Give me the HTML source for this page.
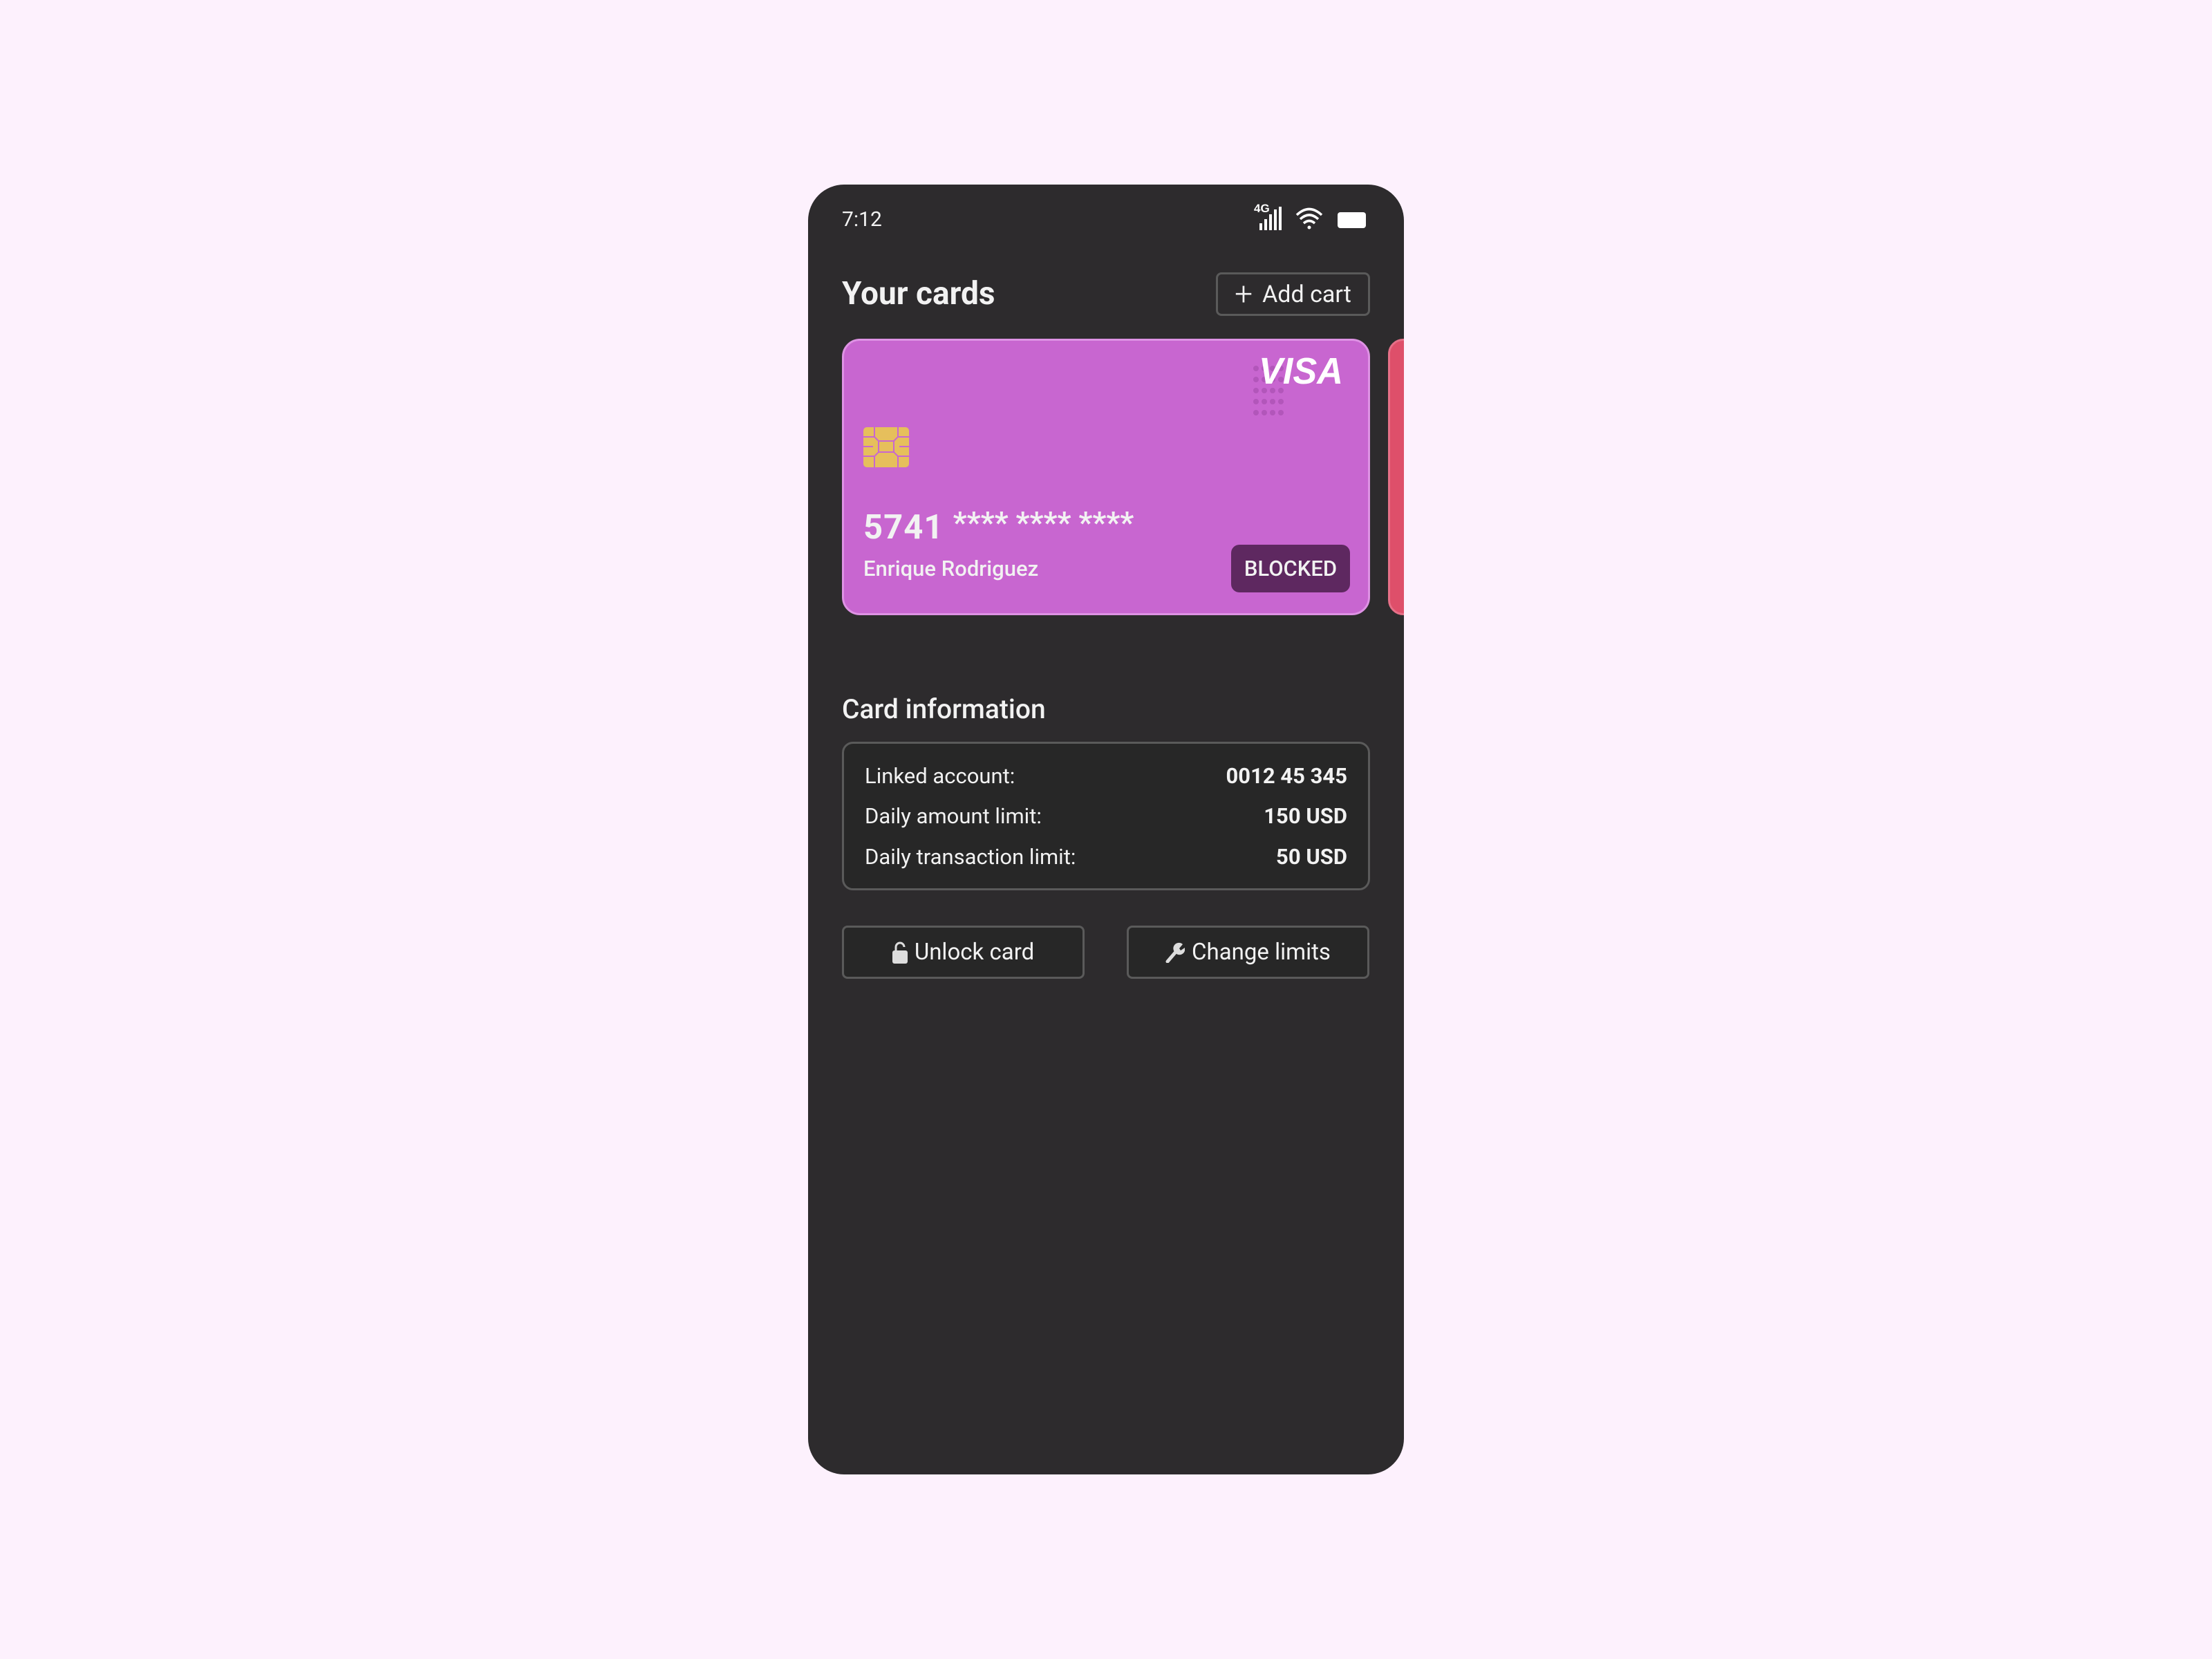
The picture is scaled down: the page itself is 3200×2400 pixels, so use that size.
<!DOCTYPE html>
<html><head><meta charset="utf-8"><style>
*{margin:0;padding:0;box-sizing:border-box}
body{width:3200px;height:2400px;background:#fdf1fd;font-family:"Roboto","Liberation Sans",sans-serif;position:relative;overflow:hidden;color:#f2f2f2}
.ph{position:absolute;left:1169px;top:267px;width:862px;height:1866px;background:#2d2b2d;border-radius:52px;overflow:hidden}
.a{position:absolute}
.card{left:49px;top:223px;width:764px;height:400px;background:#c866d0;border:3px solid #de92e4;border-radius:26px}
.red{left:839px;top:223px;width:60px;height:400px;background:#de4f6a;border-radius:22px;border:3px solid #e67088}
.box{left:49px;top:806px;width:764px;height:215px;border:3px solid #5a5a5a;border-radius:16px;background:#272727}
.row{position:absolute;left:30px;right:30px;font-size:31px;display:flex;justify-content:space-between}
.row b{font-weight:bold}
.btn{top:1072px;width:351px;height:77px;border:3px solid #5a5a5a;border-radius:8px;font-size:33px;display:flex;align-items:center;justify-content:center;gap:10px;background:#272727}
</style></head><body>
<div class="ph">
<div class="a" style="left:49px;top:33px;font-size:30px">7:12</div>
<svg class="a" style="left:645px;top:24px" width="180" height="46" viewBox="0 0 180 46">
<text x="0" y="16" font-size="17" font-weight="bold" fill="#fff" font-family="Liberation Sans">4G</text>
<rect x="8" y="32" width="4" height="10" fill="#fff"/><rect x="15" y="26" width="4" height="16" fill="#fff"/><rect x="22" y="19" width="4" height="23" fill="#fff"/><rect x="29" y="12" width="4" height="30" fill="#fff"/><rect x="36" y="8" width="4" height="34" fill="#fff"/>
<path d="M62 20 Q80 3 98 20 M67 26 Q80 14 93 26 M72 32 Q80 25 88 32" stroke="#fff" stroke-width="3.5" fill="none"/><circle cx="80" cy="38" r="2.5" fill="#fff"/>
<rect x="121" y="16" width="41" height="23" rx="4" fill="#fff"/>
</svg>
<div class="a" style="left:49px;top:131px;font-size:46px;font-weight:bold">Your cards</div>
<div class="a" style="left:590px;top:127px;width:223px;height:63px;border:3px solid #5a5a5a;border-radius:8px;font-size:34px;display:flex;align-items:center;justify-content:center;gap:14px"><span style="font-size:46px;font-weight:300;line-height:1">+</span>Add cart</div>
<div class="a card">
 <svg class="a" style="left:590px;top:18px" width="140" height="100" viewBox="0 0 140 100">
 <g fill="#b256ba"><circle cx="6" cy="22" r="4"/><circle cx="18" cy="22" r="4"/><circle cx="30" cy="22" r="4"/><circle cx="42" cy="22" r="4"/>
 <circle cx="6" cy="38" r="4"/><circle cx="18" cy="38" r="4"/><circle cx="30" cy="38" r="4"/><circle cx="42" cy="38" r="4"/>
 <circle cx="6" cy="54" r="4"/><circle cx="18" cy="54" r="4"/><circle cx="30" cy="54" r="4"/><circle cx="42" cy="54" r="4"/>
 <circle cx="6" cy="70" r="4"/><circle cx="18" cy="70" r="4"/><circle cx="30" cy="70" r="4"/><circle cx="42" cy="70" r="4"/>
 <circle cx="6" cy="86" r="4"/><circle cx="18" cy="86" r="4"/><circle cx="30" cy="86" r="4"/><circle cx="42" cy="86" r="4"/></g>
 <text x="10" y="44" font-size="54" font-weight="900" font-style="italic" fill="#fff" font-family="Liberation Sans" textLength="122" lengthAdjust="spacingAndGlyphs">VISA</text>
 </svg>
 <svg class="a" style="left:28px;top:125px" width="66" height="58" viewBox="0 0 66 58"><rect width="66" height="58" rx="5" fill="#e6bf5c"/><path d="M0 14H16M0 28H14M0 42H16M50 14H66M52 28H66M50 42H66M16 0V14L22 20H44L50 14V0M16 58V42L22 36H44L50 42V58M22 20V36M44 20V36" stroke="#c866d0" stroke-width="2" fill="none"/></svg>
 <div class="a" style="left:28px;top:237px;font-size:49px;font-weight:bold;letter-spacing:1px">5741 <span style="font-size:44px;vertical-align:8px;letter-spacing:0">**** **** ****</span></div>
 <div class="a" style="left:28px;top:311px;font-size:31px;font-weight:500">Enrique Rodriguez</div>
 <div class="a" style="left:560px;top:295px;width:172px;height:69px;background:#5e2860;border-radius:12px;font-size:31px;font-weight:500;display:flex;align-items:center;justify-content:center">BLOCKED</div>
</div>
<div class="a red"></div>
<div class="a" style="left:49px;top:736px;font-size:39px;font-weight:500">Card information</div>
<div class="a box">
 <div class="row" style="top:28px"><span>Linked account:</span><b>0012 45 345</b></div>
 <div class="row" style="top:86px"><span>Daily amount limit:</span><b>150 USD</b></div>
 <div class="row" style="top:145px"><span>Daily transaction limit:</span><b>50 USD</b></div>
</div>
<div class="a btn" style="left:49px"><svg width="22" height="32" viewBox="0 0 22 32"><path d="M5 14V8a6 6 0 0 1 12 0" stroke="#ddd" stroke-width="3" fill="none"/><rect x="0" y="13" width="22" height="19" rx="3" fill="#ddd"/></svg>Unlock card</div>
<div class="a btn" style="left:461px"><svg width="28" height="30" viewBox="0 0 28 30"><path d="M3 28L15 14" stroke="#ddd" stroke-width="5" stroke-linecap="round"/><path d="M14 15a8 8 0 0 1 11-12l-5 6 2 3 6-4a8 8 0 0 1-12 9z" fill="#ddd"/></svg>Change limits</div>
</div>
</body></html>
